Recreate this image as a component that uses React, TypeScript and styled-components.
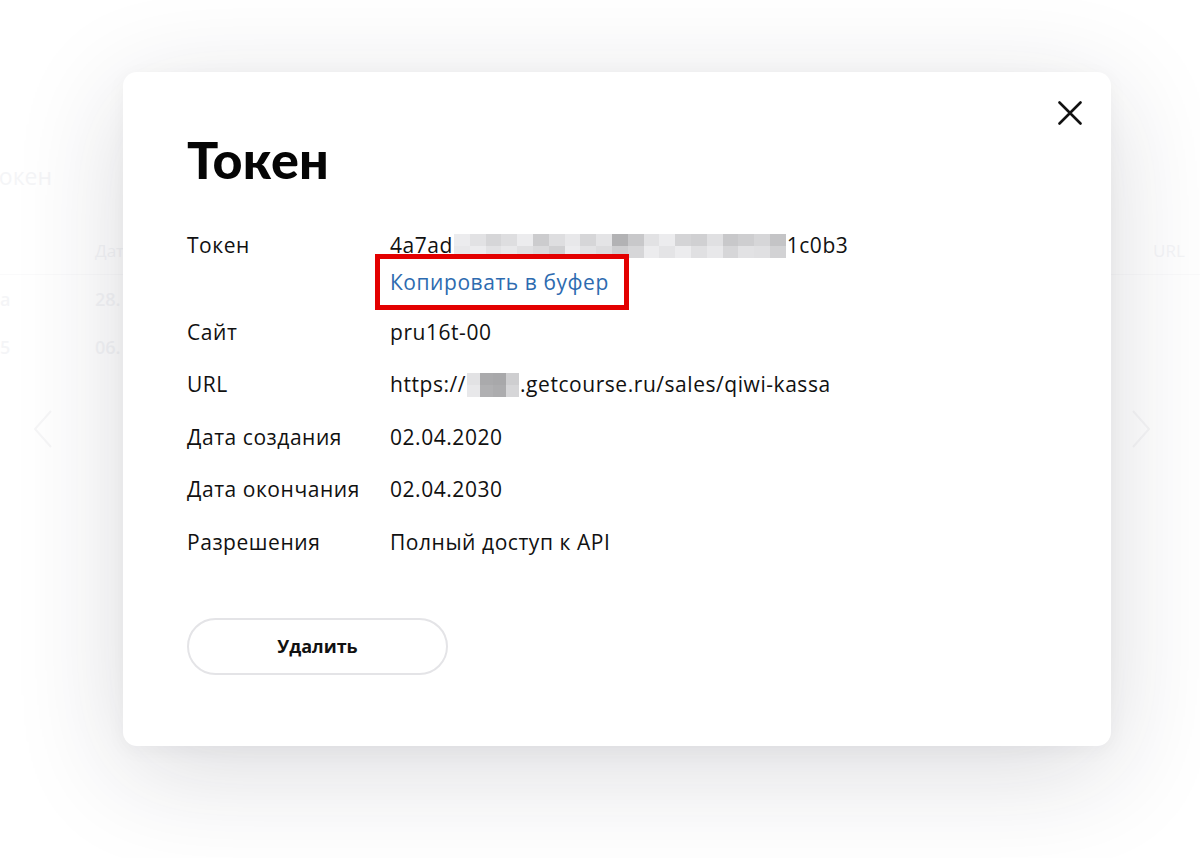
import React from "react";
import styled, { createGlobalStyle } from "styled-components";

const GlobalStyle = createGlobalStyle`
  html, body {
    margin: 0;
    padding: 0;
    background: #ffffff;
  }
  body {
    font-family: "Open Sans", Lato, sans-serif;
    color: #111111;
  }
`;

// shades for the pixelated (censored) parts
const tokenShades = [
  [236, 226, 214, 222, 236, 204, 222, 232, 214, 228, 178, 200, 226, 236, 212, 208, 224, 200, 206, 214, 196],
  [232, 236, 226, 232, 224, 218, 208, 236, 226, 220, 206, 214, 236, 228, 236, 224, 232, 214, 226, 224, 210],
];
const urlShades = [[226, 170, 168, 206], [232, 176, 172, 214]];

const Pixelated = ({ shades, cell }: { shades: number[][]; cell: number }) => (
  <PixelBox>
    {shades.map((row, i) => (
      <PixelRow key={i}>
        {row.map((s, j) => (
          <Pixel key={j} $w={cell} style={{ background: `rgb(${s},${s},${s + 2})` }} />
        ))}
      </PixelRow>
    ))}
  </PixelBox>
);

const rows: { label: string; value: React.ReactNode }[] = [
  { label: "Сайт", value: "pru16t-00" },
  {
    label: "URL",
    value: (
      <>
        https://
        <Pixelated shades={urlShades} cell={13} />
        .getcourse.ru/sales/qiwi-kassa
      </>
    ),
  },
  { label: "Дата создания", value: "02.04.2020" },
  { label: "Дата окончания", value: "02.04.2030" },
  { label: "Разрешения", value: "Полный доступ к API" },
];

const App = () => {
  return (
    <>
      <GlobalStyle />
      <Page>
        <BgTitle>токен</BgTitle>
        <BgTable>
          <BgRow $head>
            <BgCell />
            <BgCell>Дата</BgCell>
            <BgSpacer />
            <BgCell>URL</BgCell>
          </BgRow>
          <BgRow>
            <BgCell>а</BgCell>
            <BgCell>28.</BgCell>
          </BgRow>
          <BgRow>
            <BgCell>5</BgCell>
            <BgCell>06.</BgCell>
          </BgRow>
        </BgTable>
        <BgNav>
          <Chevron viewBox="0 0 24 40">
            <path d="M20 2 L4 20 L20 38" />
          </Chevron>
          <Chevron viewBox="0 0 24 40">
            <path d="M4 2 L20 20 L4 38" />
          </Chevron>
        </BgNav>
      </Page>

      <Overlay>
        <Modal>
          <CloseButton aria-label="Закрыть">
            <svg width="24" height="24" viewBox="0 0 24 24">
              <path d="M1.5 1.5 L22.5 22.5 M22.5 1.5 L1.5 22.5" stroke="#111" strokeWidth="2.6" strokeLinecap="round" />
            </svg>
          </CloseButton>
          <Title>Токен</Title>
          <Details>
            <Label>Токен</Label>
            <Value>
              <Line>
                4a7ad
                <Pixelated shades={tokenShades} cell={15.8} />
                1c0b3
              </Line>
              <Highlight>
                <CopyLink href="#">Копировать в буфер</CopyLink>
              </Highlight>
            </Value>
            {rows.map((r) => (
              <React.Fragment key={r.label}>
                <Label>{r.label}</Label>
                <Value>
                  <Line>{r.value}</Line>
                </Value>
              </React.Fragment>
            ))}
          </Details>
          <DeleteButton>Удалить</DeleteButton>
        </Modal>
      </Overlay>
    </>
  );
};

export default App;

const Page = styled.div`
  position: relative;
  width: 1200px;
  height: 858px;
  overflow: hidden;
  background: #ffffff;
  color: #eff0f3;
`;

const BgTitle = styled.div`
  margin: 160px 0 0 -12px;
  font-size: 23px;
  font-weight: 400;
`;

const BgTable = styled.div`
  margin-top: 34px;
  display: flex;
  flex-direction: column;
`;

const BgRow = styled.div<{ $head?: boolean }>`
  display: flex;
  align-items: center;
  height: 48px;
  font-size: ${(p) => (p.$head ? "17px" : "18px")};
  font-weight: ${(p) => (p.$head ? 400 : 600)};
  border-bottom: ${(p) => (p.$head ? "1px solid #f7f7f9" : "none")};
`;

const BgCell = styled.div`
  flex-shrink: 0;
  width: 95px;
  white-space: nowrap;
`;

const BgSpacer = styled.div`
  flex-shrink: 0;
  width: 963px;
`;

const BgNav = styled.div`
  display: flex;
  justify-content: space-between;
  padding: 0 46px 0 30px;
  margin-top: 38px;
`;

const Chevron = styled.svg`
  width: 26px;
  height: 40px;
  fill: none;
  stroke: #f1f1f3;
  stroke-width: 2;
`;

const Overlay = styled.div`
  position: absolute;
  inset: 0;
  display: flex;
  align-items: flex-start;
  justify-content: flex-start;
  padding: 72px 0 0 123px;
  background: rgba(255, 255, 255, 0.35);
`;

const Modal = styled.div`
  position: relative;
  box-sizing: border-box;
  width: 988px;
  height: 674px;
  padding: 61px 64px 0;
  background: #ffffff;
  border-radius: 14px;
  box-shadow: 0 24px 110px rgba(30, 30, 50, 0.16), 0 4px 20px rgba(30, 30, 50, 0.04);
`;

const CloseButton = styled.button`
  position: absolute;
  top: 29px;
  right: 29px;
  width: 24px;
  height: 24px;
  padding: 0;
  border: none;
  background: none;
  cursor: pointer;
  display: flex;
`;

const Title = styled.h1`
  margin: 0;
  font-family: Lato, "Open Sans", sans-serif;
  font-size: 52px;
  line-height: 52px;
  font-weight: 900;
  color: #050505;
  letter-spacing: 0.3px;
`;

const Details = styled.div`
  display: grid;
  grid-template-columns: 203px 1fr;
  row-gap: 23.5px;
  margin-top: 46px;
  font-size: 21px;
  line-height: 29px;
  letter-spacing: 0.55px;
  color: #111;
`;

const Label = styled.div`
  font-weight: 400;
  white-space: nowrap;
`;

const Value = styled.div`
  display: flex;
  flex-direction: column;
  align-items: flex-start;
`;

const Line = styled.div`
  display: flex;
  align-items: center;
  white-space: nowrap;
`;

const PixelBox = styled.span`
  display: inline-flex;
  flex-direction: column;
  margin: 0 1px;
`;

const PixelRow = styled.span`
  display: flex;
`;

const Pixel = styled.span<{ $w: number }>`
  display: block;
  width: ${(p) => p.$w}px;
  height: 12px;
`;

const Highlight = styled.div`
  margin: -6px 0 -16px -15px;
  padding: 5px 15px 5px 10px;
  border: 5px solid #e30000;
`;

const CopyLink = styled.a`
  display: block;
  color: #2d6bb0;
  text-decoration: none;
  line-height: 36px;
  white-space: nowrap;
`;

const DeleteButton = styled.button`
  margin-top: 61px;
  width: 261px;
  height: 57px;
  border: 2px solid #e4e4e7;
  border-radius: 29px;
  background: #ffffff;
  font-family: "Open Sans", Lato, sans-serif;
  font-size: 18px;
  font-weight: 700;
  color: #111;
  cursor: pointer;
`;
